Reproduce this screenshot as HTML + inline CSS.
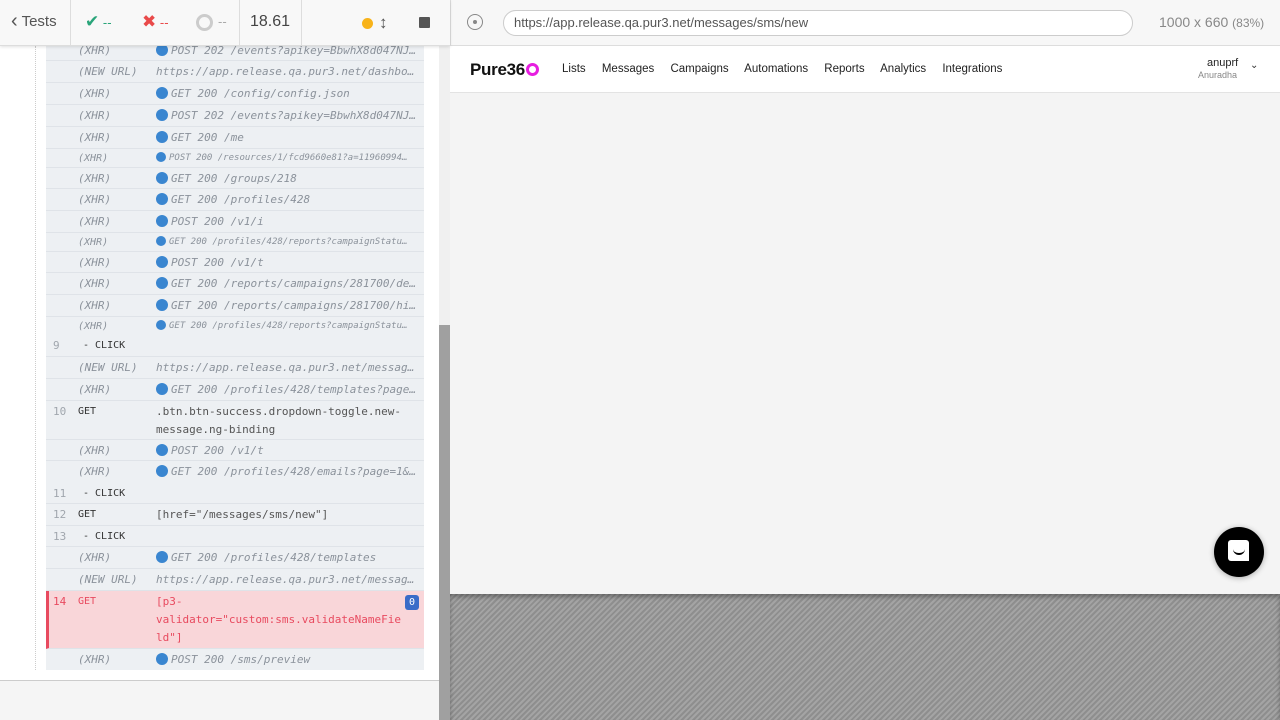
<!DOCTYPE html>
<html><head><meta charset="utf-8"><style>
*{box-sizing:border-box;margin:0;padding:0}
body{width:1280px;height:720px;overflow:hidden;position:relative;font-family:"Liberation Sans",sans-serif;background:#fff}
.abs{position:absolute}
.mono{font-family:"DejaVu Sans Mono","Liberation Mono",monospace}
.row{position:absolute;left:46px;width:378px;background:#edf0f3;border-bottom:1px solid #dfe3e8;font-size:11px;color:#8b929b}
.row .a{position:absolute;left:32px;font-style:italic}
.row .b{position:absolute;left:110px;font-style:italic;white-space:nowrap;overflow:hidden;text-overflow:ellipsis;width:262px}
.row .n{position:absolute;left:7px;color:#a0a6ad}
.row .c{position:absolute;left:32px;color:#333;font-size:10px}
.row.s{font-size:9px}
.dot{display:inline-block;width:12px;height:12px;border-radius:50%;background:#3a86d0;vertical-align:-2px;margin-right:3px}
.s .dot{width:10px;height:10px}
</style></head><body>
<div class="abs" style="left:0;top:0;width:450px;height:46px;background:#f8f8f8;border-bottom:1px solid #ddd;box-shadow:0 1px 3px rgba(0,0,0,.12);z-index:2">
 <div class="abs" style="left:11px;top:13px;font-size:15px;color:#555"><span style="font-size:20px;line-height:16px;vertical-align:-1px">‹</span> Tests</div>
 <div class="abs" style="left:70px;top:0;width:1px;height:46px;background:#ddd"></div>
 <div class="abs" style="left:85px;top:12px;font-size:17px;color:#2aa57a">✔<span style="font-size:13px"> --</span></div>
 <div class="abs" style="left:142px;top:12px;font-size:17px;color:#e94a4a">✖<span style="font-size:13px"> --</span></div>
 <div class="abs" style="left:196px;top:14px;width:17px;height:17px;border:3px solid #ccc;border-radius:50%"></div>
 <div class="abs" style="left:218px;top:14px;font-size:13px;color:#aaa">--</div>
 <div class="abs" style="left:239px;top:0;width:1px;height:46px;background:#ddd"></div>
 <div class="abs" style="left:250px;top:13px;font-size:16px;color:#444">18.61</div>
 <div class="abs" style="left:301px;top:0;width:1px;height:46px;background:#ddd"></div>
 <div class="abs" style="left:362px;top:18px;width:11px;height:11px;border-radius:50%;background:#f8b31a"></div>
 <div class="abs" style="left:379px;top:13px;font-size:17px;line-height:20px;color:#555">↕</div>
 <div class="abs" style="left:419px;top:17px;width:11px;height:11px;background:#555;border-radius:1px"></div>
</div>
<div class="abs" style="left:35px;top:46px;width:0;height:624px;border-left:1px dotted #ccc"></div>
<div class="mono">
<div class="row" style="top:40px;height:21px;line-height:21px"><span class="a">(XHR)</span><span class="b"><span class="dot"></span>POST 202 /events?apikey=BbwhX8d047NJ…</span></div>
<div class="row" style="top:61px;height:22px;line-height:22px"><span class="a">(NEW URL)</span><span class="b">https://app.release.qa.pur3.net/dashbo…</span></div>
<div class="row" style="top:83px;height:22px;line-height:22px"><span class="a">(XHR)</span><span class="b"><span class="dot"></span>GET 200 /config/config.json</span></div>
<div class="row" style="top:105px;height:22px;line-height:22px"><span class="a">(XHR)</span><span class="b"><span class="dot"></span>POST 202 /events?apikey=BbwhX8d047NJ…</span></div>
<div class="row" style="top:127px;height:22px;line-height:22px"><span class="a">(XHR)</span><span class="b"><span class="dot"></span>GET 200 /me</span></div>
<div class="row s" style="top:149px;height:19px;line-height:19px"><span class="a" style="font-size:10px">(XHR)</span><span class="b"><span class="dot"></span>POST 200 /resources/1/fcd9660e81?a=11960994…</span></div>
<div class="row" style="top:168px;height:21px;line-height:21px"><span class="a">(XHR)</span><span class="b"><span class="dot"></span>GET 200 /groups/218</span></div>
<div class="row" style="top:189px;height:22px;line-height:22px"><span class="a">(XHR)</span><span class="b"><span class="dot"></span>GET 200 /profiles/428</span></div>
<div class="row" style="top:211px;height:22px;line-height:22px"><span class="a">(XHR)</span><span class="b"><span class="dot"></span>POST 200 /v1/i</span></div>
<div class="row s" style="top:233px;height:19px;line-height:19px"><span class="a" style="font-size:10px">(XHR)</span><span class="b"><span class="dot"></span>GET 200 /profiles/428/reports?campaignStatu…</span></div>
<div class="row" style="top:252px;height:21px;line-height:21px"><span class="a">(XHR)</span><span class="b"><span class="dot"></span>POST 200 /v1/t</span></div>
<div class="row" style="top:273px;height:22px;line-height:22px"><span class="a">(XHR)</span><span class="b"><span class="dot"></span>GET 200 /reports/campaigns/281700/de…</span></div>
<div class="row" style="top:295px;height:22px;line-height:22px"><span class="a">(XHR)</span><span class="b"><span class="dot"></span>GET 200 /reports/campaigns/281700/hi…</span></div>
<div class="row s" style="top:317px;height:19px;line-height:19px;border-bottom:none"><span class="a" style="font-size:10px">(XHR)</span><span class="b"><span class="dot"></span>GET 200 /profiles/428/reports?campaignStatu…</span></div>
<div class="row" style="top:336px;height:21px;line-height:19px"><span class="n">9</span><span class="c" style="left:37px">- CLICK</span></div>
<div class="row" style="top:357px;height:22px;line-height:22px"><span class="a">(NEW URL)</span><span class="b">https://app.release.qa.pur3.net/messag…</span></div>
<div class="row" style="top:379px;height:22px;line-height:22px"><span class="a">(XHR)</span><span class="b"><span class="dot"></span>GET 200 /profiles/428/templates?page…</span></div>
<div class="row" style="top:401px;height:39px;line-height:18px;padding-top:2px"><span class="n">10</span><span class="c">GET</span><span class="b" style="font-style:normal;color:#555;white-space:normal">.btn.btn-success.dropdown-toggle.new-message.ng-binding</span></div>
<div class="row" style="top:440px;height:21px;line-height:21px"><span class="a">(XHR)</span><span class="b"><span class="dot"></span>POST 200 /v1/t</span></div>
<div class="row" style="top:461px;height:22px;line-height:22px;border-bottom:none"><span class="a">(XHR)</span><span class="b"><span class="dot"></span>GET 200 /profiles/428/emails?page=1&amp;…</span></div>
<div class="row" style="top:483px;height:21px;line-height:21px"><span class="n">11</span><span class="c" style="left:37px">- CLICK</span></div>
<div class="row" style="top:504px;height:22px;line-height:22px"><span class="n">12</span><span class="c">GET</span><span class="b" style="font-style:normal;color:#555">[href="/messages/sms/new"]</span></div>
<div class="row" style="top:526px;height:21px;line-height:21px"><span class="n">13</span><span class="c" style="left:37px">- CLICK</span></div>
<div class="row" style="top:547px;height:22px;line-height:22px"><span class="a">(XHR)</span><span class="b"><span class="dot"></span>GET 200 /profiles/428/templates</span></div>
<div class="row" style="top:569px;height:22px;line-height:22px"><span class="a">(NEW URL)</span><span class="b">https://app.release.qa.pur3.net/messag…</span></div>
<div class="row" style="top:591px;height:58px;line-height:18px;padding-top:2px;background:#f9d6d9;border-left:3px solid #e84a5f;color:#e84a5f"><span class="n" style="left:4px;color:#e84a5f">14</span><span class="c" style="left:29px;color:#e84a5f">GET</span><span class="b" style="left:107px;font-style:normal;color:#e84a5f;white-space:normal;word-break:break-all;width:250px">[p3-<br>validator="custom:sms.validateNameFie ld"]</span><span class="abs" style="left:356px;top:4px;width:14px;height:15px;background:#3a6cc8;color:#fff;border-radius:3px;font-size:10px;line-height:15px;text-align:center">0</span></div>
<div class="row" style="top:649px;height:21px;line-height:21px;border-bottom:none"><span class="a">(XHR)</span><span class="b"><span class="dot"></span>POST 200 /sms/preview</span></div>
</div>
<div class="abs" style="left:0;top:680px;width:439px;height:40px;background:#f5f5f5;border-top:1px solid #ccc"></div>
<div class="abs" style="left:439px;top:46px;width:11px;height:279px;background:#f0f0f0"></div>
<div class="abs" style="left:439px;top:325px;width:11px;height:395px;background:#a0a0a0"></div>
<div class="abs" style="left:450px;top:0;width:830px;height:46px;background:#f7f7f7;border-left:1px solid #ddd;border-bottom:1px solid #ddd">
 <div class="abs" style="left:16px;top:14px;width:16px;height:16px;border:1.5px solid #888;border-radius:50%"></div>
 <div class="abs" style="left:22px;top:20px;width:4px;height:4px;border-radius:50%;background:#888"></div>
 <div class="abs" style="left:52px;top:10px;width:630px;height:26px;border:1px solid #ccc;border-radius:13px;background:#fff;font-size:13px;color:#555;line-height:24px;padding-left:10px">https://app.release.qa.pur3.net/messages/sms/new</div>
 <div class="abs" style="left:708px;top:14px;font-size:14px;color:#888">1000 x 660 <span style="font-size:12px">(83%)</span></div>
</div>
<div class="abs" style="left:450px;top:47px;width:830px;height:547px;background:#f4f4f4">
 <div class="abs" style="left:0;top:0;width:830px;height:46px;background:#fff;border-bottom:1px solid #e3e3e3">
  <div class="abs" style="left:20px;top:13px;font-size:17px;font-weight:bold;color:#111;letter-spacing:-0.3px">Pure36<span style="display:inline-block;width:13px;height:13px;border:3px solid #e71ee0;border-radius:50%;vertical-align:-1px;margin-left:1px"></span></div>
  <div class="abs" style="left:112px;top:16px;font-size:11.5px;color:#222;word-spacing:13px;white-space:nowrap">Lists Messages Campaigns Automations Reports Analytics Integrations</div>
  <div class="abs" style="left:757px;top:10px;font-size:11px;color:#222">anuprf</div>
  <div class="abs" style="left:748px;top:23px;font-size:9px;color:#888">Anuradha</div>
  <div class="abs" style="left:800px;top:13px;font-size:10px;color:#333">⌄</div>
 </div>
 <div class="abs" style="left:764px;top:480px;width:50px;height:50px;border-radius:50%;background:#000;box-shadow:0 1px 6px rgba(0,0,0,.3)">
  <div class="abs" style="left:14px;top:13px;width:21px;height:21px;background:#fff;border-radius:3px 3px 0 3px"></div>
  <div class="abs" style="left:19px;top:22px;width:12px;height:6px;border-bottom:2px solid #000;border-radius:0 0 8px 8px"></div>
 </div>
</div>
<div class="abs" style="left:450px;top:594px;width:830px;height:126px;background:repeating-linear-gradient(135deg,#8e8e8e 0 2px,#a4a4a4 2px 4px);box-shadow:inset 0 3px 4px rgba(0,0,0,.3)"></div>
</body></html>
